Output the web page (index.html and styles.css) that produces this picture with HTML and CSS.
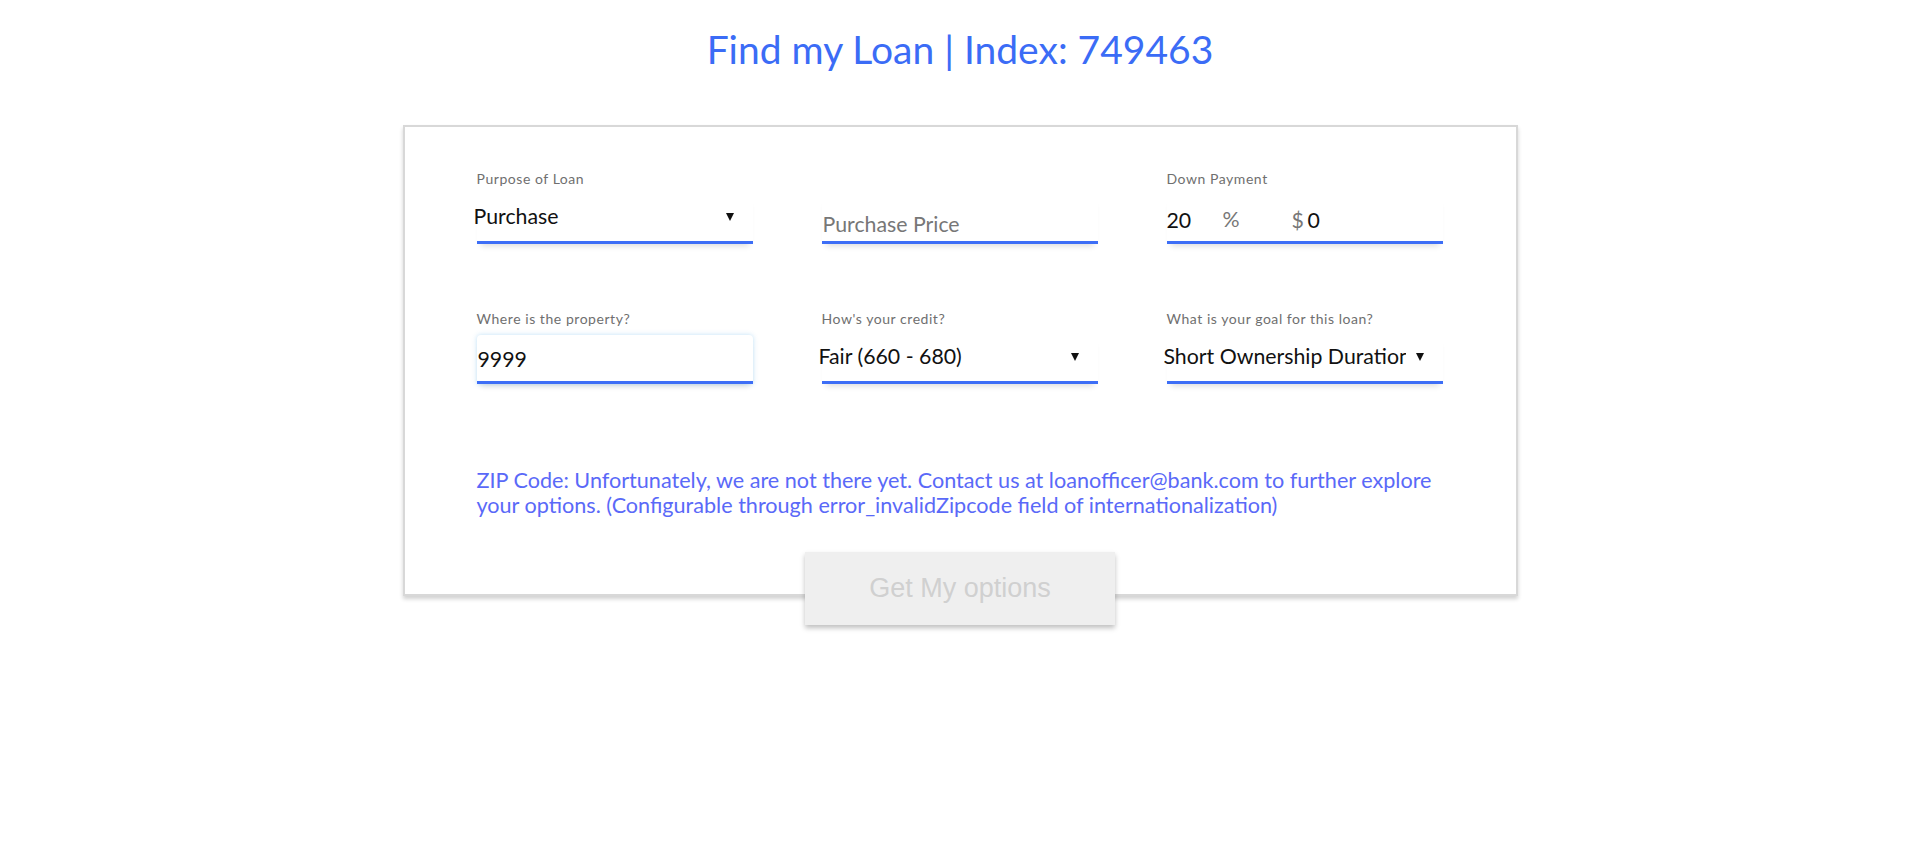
FILE: index.html
```html
<!DOCTYPE html>
<html lang="en">
<head>
<meta charset="utf-8">
<title>Find my Loan</title>
<link rel="stylesheet" href="styles.css">
</head>
<body>
<h1 class="title">Find my Loan | Index: 749463</h1>
<main class="wrap">
  <form class="card" id="loan-form">
    <div class="fields">
      <div class="field">
        <label class="label">Purpose of Loan</label>
        <div class="control control-select">
          <span class="value">Purchase</span>
          <span class="arrow"></span>
        </div>
      </div>
      <div class="field">
        <label class="label">&nbsp;</label>
        <div class="control control-price">
          <span class="placeholder">Purchase Price</span>
        </div>
      </div>
      <div class="field">
        <label class="label">Down Payment</label>
        <div class="control control-down">
          <span class="down-pct">20</span>
          <span class="unit unit-pct">%</span>
          <span class="unit unit-dollar">$</span>
          <span class="down-amt">0</span>
        </div>
      </div>
      <div class="field">
        <label class="label">Where is the property?</label>
        <div class="control control-zip">
          <span class="value value-zip">9999</span>
        </div>
      </div>
      <div class="field">
        <label class="label">How's your credit?</label>
        <div class="control control-select">
          <span class="value">Fair (660 - 680)</span>
          <span class="arrow"></span>
        </div>
      </div>
      <div class="field">
        <label class="label">What is your goal for this loan?</label>
        <div class="control control-select">
          <span class="value">Short Ownership Duration</span>
          <span class="arrow"></span>
        </div>
      </div>
    </div>
    <p class="error">ZIP Code: Unfortunately, we are not there yet. Contact us at loanofficer@bank.com to further explore<br>your options. (Configurable through error_invalidZipcode field of internationalization)</p>
  </form>
  <div class="actions">
    <button type="submit" form="loan-form" class="submit" disabled>Get My options</button>
  </div>
</main>
</body>
</html>
```

FILE: styles.css
```css
* { box-sizing: border-box; }

html, body {
  margin: 0;
  background: #ffffff;
}

body {
  font-family: "Lato", "Open Sans", sans-serif;
  color: #1a1a1a;
}

.title {
  margin: 0;
  padding-top: 26px;
  font-size: 39px;
  line-height: 47px;
  font-weight: 400;
  color: #3b6cf6;
  text-align: center;
}

.wrap {
  display: flex;
  flex-direction: column;
  align-items: center;
  margin-top: 52px;
  padding-bottom: 40px;
}

.card {
  width: 1115px;
  padding: 44px 73px 77px 72px;
  border: 2px solid #d8d8d8;
  box-shadow: 0 3px 4px rgba(0, 0, 0, 0.18);
  background: #fff;
}

.fields {
  display: grid;
  grid-template-columns: repeat(3, 276px);
  column-gap: 69px;
  row-gap: 67px;
}

.field {
  display: flex;
  flex-direction: column;
}

.label {
  display: block;
  height: 16px;
  margin-bottom: 8px;
  font-size: 14px;
  line-height: 16px;
  letter-spacing: 0.55px;
  color: #6f6f6f;
  white-space: nowrap;
}

.control {
  height: 49px;
  display: flex;
  align-items: flex-end;
  border-bottom: 3px solid #3d6ef6;
  box-shadow: 0 6px 6px -4px rgba(0, 0, 0, 0.14);
  font-size: 21.3px;
  line-height: 24px;
}

.control-select {
  padding-bottom: 13px;
}

.control-select .value {
  flex: 1;
  min-width: 0;
  margin-left: -3px;
  margin-right: 10px;
  white-space: nowrap;
  overflow: hidden;
  color: #111;
}

.arrow {
  flex: none;
  width: 0;
  height: 0;
  margin: 0 19px 7px 0;
  border-left: 4px solid transparent;
  border-right: 4px solid transparent;
  border-top: 8px solid #111;
}

.control-price {
  padding-bottom: 5px;
}

.placeholder {
  margin-left: 1px;
  color: #777;
}

.control-down {
  padding-bottom: 9px;
}

.down-pct {
  width: 56px;
  color: #111;
}

.unit {
  color: #777;
}

.unit-pct {
  width: 69px;
  position: relative;
  top: -1px;
}

.unit-dollar {
  width: 16px;
}

.down-amt {
  color: #111;
}

.control-zip {
  padding-bottom: 10px;
  background: #fff;
  border-radius: 4px 4px 0 0;
  box-shadow: 0 0 5px rgba(110, 185, 235, 0.45), 0 6px 6px -4px rgba(0, 0, 0, 0.14);
}

.value-zip {
  margin-left: 1px;
  color: #111;
}

.error {
  margin: 84px 0 0;
  font-size: 21.6px;
  line-height: 24.5px;
  color: #5a69f8;
}

.actions {
  position: relative;
  margin-top: -44px;
}

.submit {
  display: block;
  width: 310px;
  height: 73px;
  border: none;
  background: #efefef;
  color: #d0d0d0;
  font-family: "Liberation Sans", Arial, sans-serif;
  font-size: 27px;
  box-shadow: 0 3px 5px rgba(0, 0, 0, 0.25);
}
```
